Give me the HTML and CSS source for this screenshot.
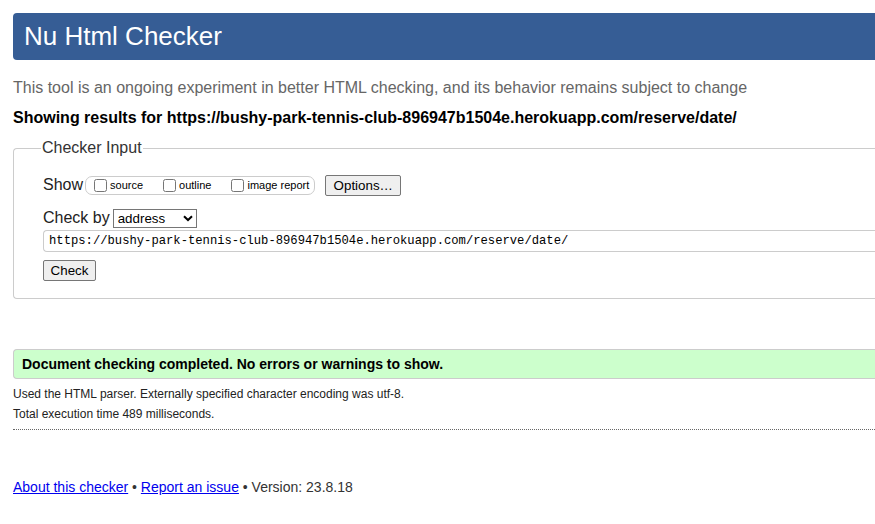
FILE: index.html
```html
<!DOCTYPE html>
<html lang="en">
<head>
<meta charset="utf-8">
<title>Nu Html Checker</title>
<link rel="stylesheet" href="styles.css">
</head>
<body>
<div class="page">
  <h1 class="title">Nu Html Checker</h1>
  <p class="intro">This tool is an ongoing experiment in better HTML checking, and its behavior remains subject to change</p>
  <p class="results-for">Showing results for https://bushy-park-tennis-club-896947b1504e.herokuapp.com/reserve/date/</p>
  <fieldset class="checker">
    <legend class="legend">Checker Input</legend>
    <div class="row show-row">
      <span class="label">Show</span>
      <span class="opts">
        <label class="opt"><input type="checkbox" class="cb">source</label>
        <label class="opt"><input type="checkbox" class="cb">outline</label>
        <label class="opt"><input type="checkbox" class="cb">image report</label>
      </span>
      <button class="btn options">Options…</button>
    </div>
    <div class="row by-row">
      <span class="label">Check by</span>
      <span class="select">address<svg class="chev" width="10" height="7" viewBox="0 0 10 7"><path d="M1 1.2 L5 5 L9 1.2" fill="none" stroke="#000" stroke-width="2"/></svg></span>
    </div>
    <div class="url">https://bushy-park-tennis-club-896947b1504e.herokuapp.com/reserve/date/</div>
    <button class="btn check">Check</button>
  </fieldset>
  <div class="success">Document checking completed. No errors or warnings to show.</div>
  <p class="detail">Used the HTML parser. Externally specified character encoding was utf-8.</p>
  <p class="detail">Total execution time 489 milliseconds.</p>
  <hr class="dots">
  <p class="footer"><a href="#" class="link">About this checker</a> • <a href="#" class="link">Report an issue</a> • Version: 23.8.18</p>
</div>
</body>
</html>
```
FILE: styles.css
```css
html, body {
  margin: 0;
  padding: 0;
  overflow: hidden;
  background: #fff;
}
body {
  font-family: "Liberation Sans", Arial, sans-serif;
  color: #000;
}
.page {
  width: 880px;
  padding: 13px 0 0 13px;
}
.title {
  margin: 0;
  background: #365d95;
  color: #fff;
  font-weight: normal;
  font-size: 26px;
  line-height: 47px;
  height: 47px;
  padding: 0 0 0 11px;
  border-radius: 4px 0 0 4px;
}
.intro {
  margin: 18px 0 0 0;
  font-size: 16px;
  line-height: 20px;
  color: #666;
}
.results-for {
  margin: 10px 0 0 0;
  font-size: 16px;
  line-height: 20px;
  font-weight: bold;
  color: #000;
}
.checker {
  margin: 11px 0 0 0;
  padding: 13px 0 17px 29px;
  border: 1px solid #ccc;
  border-right: none;
  border-radius: 4px 0 0 4px;
  min-width: 0;
}
.legend {
  padding: 0 1px;
  margin-left: -2px;
  font-size: 16px;
  color: #333;
}
.row {
  display: flex;
  align-items: center;
  font-size: 16px;
  color: #222;
}
.show-row {
  height: 22px;
  margin-top: 4px;
}
.label {
  line-height: 20px;
}
.opts {
  display: inline-flex;
  align-items: center;
  height: 17px;
  margin-left: 2px;
  border: 1px solid #ccc;
  border-radius: 7px;
  padding: 0 5px 0 8px;
  font-size: 11px;
  color: #000;
}
.opt {
  display: inline-flex;
  align-items: center;
  margin-right: 20px;
}
.opt:last-child {
  margin-right: 0;
}
.cb {
  margin: 0 3px 0 0;
  width: 13px;
  height: 13px;
}
.btn {
  font-family: "Liberation Sans", Arial, sans-serif;
  font-size: 13.33px;
  color: #000;
  background: #efefef;
  border: 1px solid #767676;
  border-radius: 2px;
  padding: 0 6px;
  height: 21px;
}
.options {
  margin-left: 10px;
  width: 76px;
}
.by-row {
  margin-top: 12px;
  height: 20px;
}
.select {
  display: inline-flex;
  align-items: center;
  justify-content: space-between;
  box-sizing: border-box;
  width: 84px;
  height: 19px;
  margin-left: 3px;
  padding: 0 3px 0 4px;
  border: 1px solid #767676;
  border-radius: 0;
  font-size: 13.33px;
  color: #000;
}
.chev {
  display: block;
}
.url {
  margin-top: 2px;
  height: 20px;
  line-height: 20px;
  border: 1px solid #ccc;
  border-right: none;
  border-radius: 4px 0 0 4px;
  padding-left: 5px;
  font-family: "Liberation Mono", "DejaVu Sans Mono", monospace;
  font-size: 12.2px;
  color: #000;
}
.check {
  margin-top: 8px;
  width: 53px;
  height: 21px;
}
.success {
  margin-top: 50px;
  box-sizing: border-box;
  height: 30px;
  line-height: 28px;
  padding-left: 8px;
  background: #ccffcc;
  border: 1px solid #ccc;
  border-right: none;
  border-radius: 4px 0 0 4px;
  font-size: 14px;
  font-weight: bold;
  color: #000;
}
.detail {
  margin: 8px 0 0 0;
  font-size: 12px;
  line-height: 14px;
  color: #222;
}
.detail + .detail {
  margin-top: 6px;
}
.dots {
  margin: 8px 0 0 0;
  border: none;
  border-top: 1px dotted #666;
  height: 0;
}
.footer {
  margin: 48px 0 0 0;
  font-size: 14px;
  line-height: 18px;
  color: #333;
}
.link {
  color: #0000ee;
  text-decoration: underline;
}
```
